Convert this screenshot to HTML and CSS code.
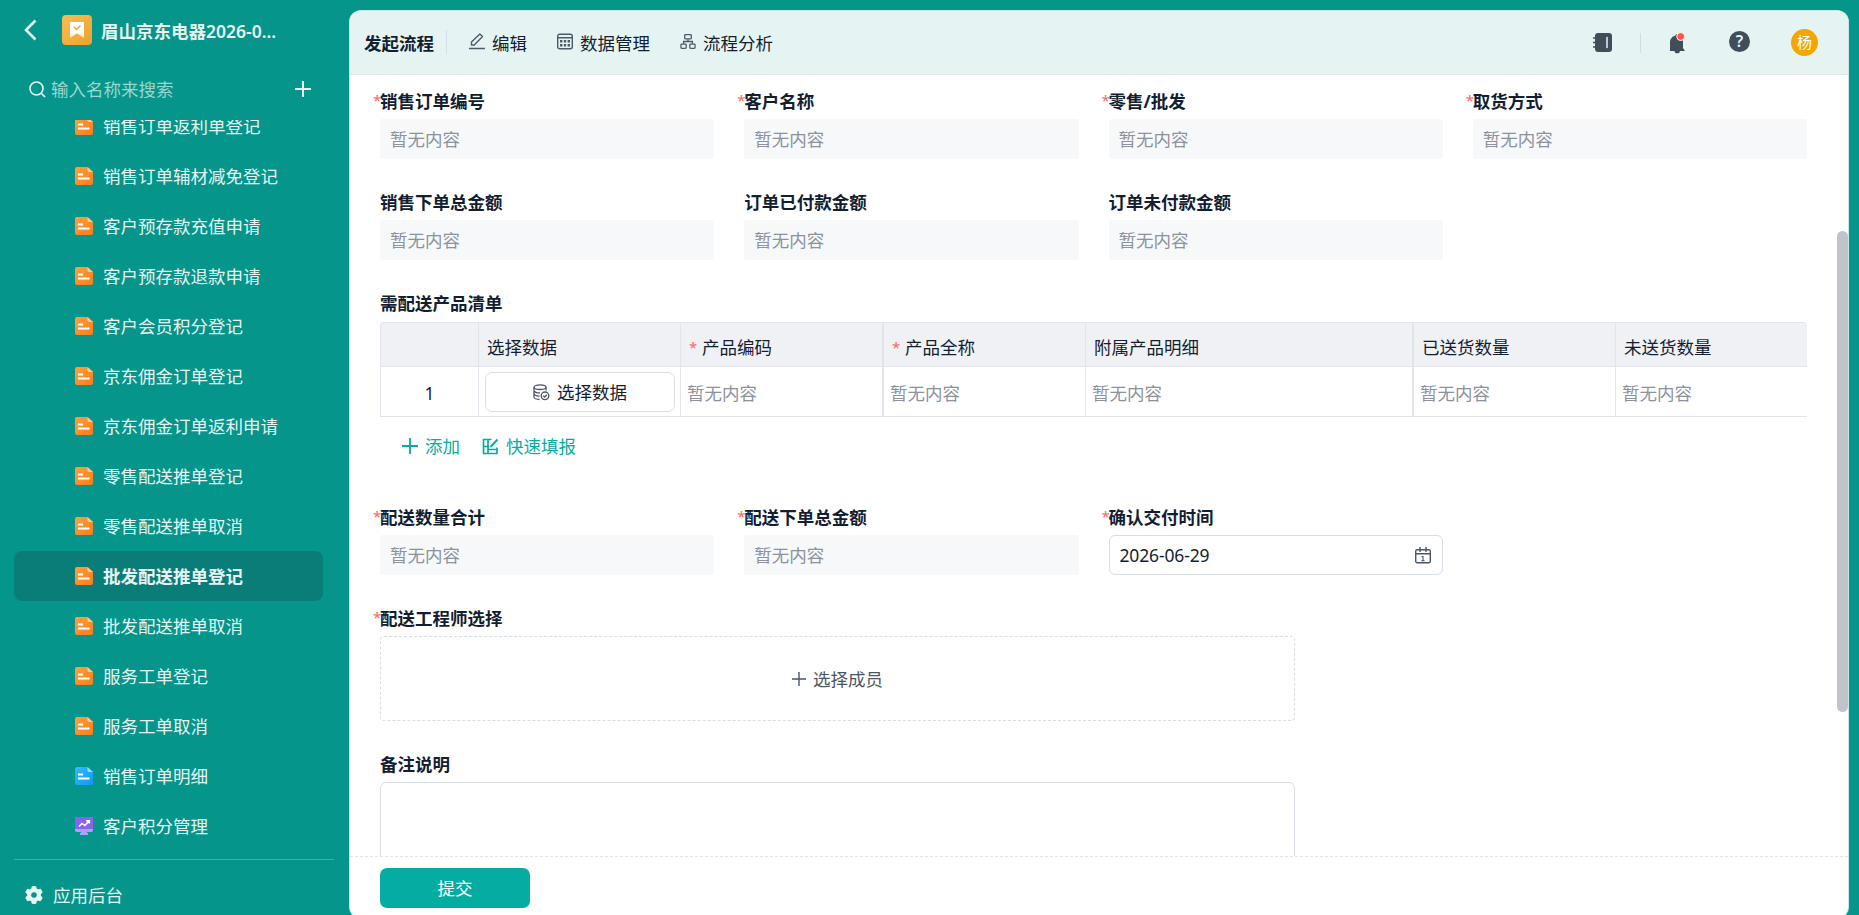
FILE: index.html
```
<!DOCTYPE html>
<html lang="zh-CN">
<head>
    <meta charset="UTF-8">
    <meta name="viewport" content="width=device-width, initial-scale=1.0">
    <title>批发配送推单登记</title>
    <link rel="stylesheet" href="styles.css">
</head>
<body>
    <svg class="defs" width="0" height="0">
        <defs>
            <linearGradient id="orange" x1="0" y1="0" x2="1" y2="1">
                <stop offset="0" stop-color="#ffa03c"/><stop offset="1" stop-color="#fb7d1a"/>
            </linearGradient>
            <linearGradient id="blue" x1="0" y1="0" x2="1" y2="1">
                <stop offset="0" stop-color="#35b8ff"/><stop offset="1" stop-color="#0a9bf0"/>
            </linearGradient>
            <linearGradient id="gold" x1="0" y1="0" x2="1" y2="1">
                <stop offset="0" stop-color="#f8bd58"/><stop offset="1" stop-color="#eda22a"/>
            </linearGradient>
            <linearGradient id="fade" x1="0" y1="0" x2="0" y2="1">
                <stop offset="0" stop-color="#fff"/><stop offset="0.6" stop-color="#fff"/><stop offset="1" stop-color="#fbdfb0"/>
            </linearGradient>
            <symbol id="doc" viewBox="0 0 18 18">
                <path d="M2 0H12.5L18 5V16a2 2 0 0 1-2 2H2a2 2 0 0 1-2-2V2a2 2 0 0 1 2-2z" fill="url(#orange)"/>
                <path d="M12.5 0L18 5H14a1.500 1.500 0 0 1-1.500-1.500z" fill="#ffc98a"/>
                <path d="M3 7.500H8M3 11.500H14.500" stroke="#fff" stroke-width="2"/>
            </symbol>
            <symbol id="plus" viewBox="0 0 16 16">
                <path d="M8 0V16M0 8H16" fill="none" stroke="currentColor"/>
            </symbol>
        </defs>
    </svg>

    <aside class="sidebar">
        <div class="app">
            <svg class="back" width="13" height="22" viewBox="0 0 13 22"><path d="M11.500 1.500L2 11L11.500 20.500" fill="none" stroke="#e6f4f3" stroke-width="2.600"/></svg>
            <svg class="logo" width="30" height="30" viewBox="0 0 30 30">
                <rect width="30" height="30" rx="4" fill="url(#gold)"/>
                <path d="M9 7H21a1 1 0 0 1 1 1V23L15 18.500L8 23V8a1 1 0 0 1 1-1z" fill="url(#fade)"/>
                <path d="M12 12L14.500 14.500L18.500 10.500" fill="none" stroke="#f0a830" stroke-width="1.500"/>
            </svg>
            <b>眉山京东电器2026-0...</b>
        </div>
        <div class="search">
            <svg width="17" height="17" viewBox="0 0 17 17"><circle cx="7.500" cy="7.500" r="6.500" fill="none" stroke="#e6f4f3" stroke-width="1.600"/><path d="M12 12L16 16" stroke="#e6f4f3" stroke-width="1.700"/></svg>
            <span>输入名称来搜索</span>
            <svg class="new" width="16" height="16"><use href="#plus"/></svg>
        </div>
        <div class="list">
            <ul>
                <li><svg width="18" height="18"><use href="#doc"/></svg>销售订单返利单登记</li>
                <li><svg width="18" height="18"><use href="#doc"/></svg>销售订单辅材减免登记</li>
                <li><svg width="18" height="18"><use href="#doc"/></svg>客户预存款充值申请</li>
                <li><svg width="18" height="18"><use href="#doc"/></svg>客户预存款退款申请</li>
                <li><svg width="18" height="18"><use href="#doc"/></svg>客户会员积分登记</li>
                <li><svg width="18" height="18"><use href="#doc"/></svg>京东佣金订单登记</li>
                <li><svg width="18" height="18"><use href="#doc"/></svg>京东佣金订单返利申请</li>
                <li><svg width="18" height="18"><use href="#doc"/></svg>零售配送推单登记</li>
                <li><svg width="18" height="18"><use href="#doc"/></svg>零售配送推单取消</li>
                <li class="active"><svg width="18" height="18"><use href="#doc"/></svg>批发配送推单登记</li>
                <li><svg width="18" height="18"><use href="#doc"/></svg>批发配送推单取消</li>
                <li><svg width="18" height="18"><use href="#doc"/></svg>服务工单登记</li>
                <li><svg width="18" height="18"><use href="#doc"/></svg>服务工单取消</li>
                <li>
                    <svg width="18" height="18" viewBox="0 0 18 18">
                        <path d="M2 0H12.500L18 5V16a2 2 0 0 1-2 2H2a2 2 0 0 1-2-2V2a2 2 0 0 1 2-2z" fill="url(#blue)"/>
                        <path d="M12.500 0L18 5H14a1.500 1.500 0 0 1-1.500-1.500z" fill="#94dbff"/>
                        <path d="M3 7.500H8M3 11.500H14.500" stroke="#fff" stroke-width="2"/>
                    </svg>销售订单明细
                </li>
                <li>
                    <svg width="18" height="18" viewBox="0 0 18 18">
                        <path d="M6 14H12V16H13V18H5V16H6z" fill="#b39bff"/>
                        <rect width="18" height="15" rx="2" fill="#b39bff"/>
                        <path d="M2 0H16a2 2 0 0 1 2 2V12H0V2a2 2 0 0 1 2-2z" fill="#8763f0"/>
                        <path d="M4 9.500L7 6.500L10 8.500L14 4M11 3.800H14.300V6.500" fill="none" stroke="#fff" stroke-width="1.500"/>
                    </svg>客户积分管理
                </li>
            </ul>
        </div>
        <div class="admin">
            <svg width="18" height="18" viewBox="0 0 18 18">
                <g fill="#e6f4f3">
                    <rect x="6.500" y="0" width="5" height="18" rx="1.500"/>
                    <rect x="6.500" y="0" width="5" height="18" rx="1.500" transform="rotate(60 9 9)"/>
                    <rect x="6.500" y="0" width="5" height="18" rx="1.500" transform="rotate(120 9 9)"/>
                    <circle cx="9" cy="9" r="7"/>
                </g>
                <circle cx="9" cy="9" r="2.800" fill="#05958a"/>
            </svg>
            <span>应用后台</span>
        </div>
    </aside>

    <main>
        <header>
            <b>发起流程</b>
            <i class="line"></i>
            <a class="tab">
                <svg width="16" height="17" viewBox="0 0 16 17" fill="none" stroke="#4d5b68" stroke-width="1.400"><path d="M0 15.500H16"/><path d="M2.500 12V9L10.800 .900L13.500 3.600L5.300 12z" stroke-linejoin="round"/></svg>编辑
            </a>
            <a class="tab">
                <svg width="16" height="17" viewBox="0 0 16 17" fill="none" stroke="#4d5b68"><rect x=".7" y="1.200" width="14.600" height="14.600" rx="2" stroke-width="1.400"/><path d="M1 4.700H15" stroke-width="1.400"/><path d="M3 8.200H13M3 12.200H13" stroke-width="2.400" stroke-dasharray="2.400 1.400"/></svg>数据管理
            </a>
            <a class="tab">
                <svg width="16" height="17" viewBox="0 0 17 17" fill="none" stroke="#4d5b68" stroke-width="1.400"><rect x="5" y="1.200" width="7" height="4.600" rx=".8"/><rect x="1" y="11.200" width="5.600" height="4.600" rx=".8"/><rect x="10.400" y="11.200" width="5.600" height="4.600" rx=".8"/><path d="M8.500 6V8.500M3.800 11V8.500H13.200V11"/></svg>流程分析
            </a>
            <div class="tools">
                <svg class="book" width="19" height="19" viewBox="0 0 19 19"><rect x="2" width="17" height="19" rx="3" fill="#414e5a"/><path d="M0 5H4M0 9.500H4M0 14H4" stroke="#414e5a" stroke-width="1.500"/><path d="M14 4.500V14.500" stroke="#e5f4f3" stroke-width="1.500" stroke-linecap="round"/></svg>
                <i class="sep"></i>
                <svg class="bell" width="17" height="22" viewBox="0 0 17 22"><path d="M6.500 3.500a1.500 1.500 0 0 1 3 0C12.500 4.500 14 7 14 10V16L16 19H0.500L1 18.500V10C1 7 3.500 4.300 6.500 3.500z" fill="#414e5a"/><path d="M5.500 19a2.700 2.300 0 0 0 5.400 0z" fill="#414e5a"/><circle cx="11.700" cy="4.500" r="4" fill="#ff5454" stroke="#fff" stroke-width="1"/></svg>
                <div class="help">?</div>
                <div class="avatar">杨</div>
            </div>
        </header>

        <div class="form">
            <div class="grid">
                <div class="item must"><label>销售订单编号</label><p>暂无内容</p></div>
                <div class="item must"><label>客户名称</label><p>暂无内容</p></div>
                <div class="item must"><label>零售/批发</label><p>暂无内容</p></div>
                <div class="item must"><label>取货方式</label><p>暂无内容</p></div>
                <div class="item"><label>销售下单总金额</label><p>暂无内容</p></div>
                <div class="item"><label>订单已付款金额</label><p>暂无内容</p></div>
                <div class="item"><label>订单未付款金额</label><p>暂无内容</p></div>
            </div>

            <div class="item detail">
                <label>需配送产品清单</label>
                <div class="table">
                    <div class="row head">
                        <span></span>
                        <span>选择数据</span>
                        <span><em>*</em>产品编码</span>
                        <span><em>*</em>产品全称</span>
                        <span>附属产品明细</span>
                        <span>已送货数量</span>
                        <span>未送货数量</span>
                    </div>
                    <div class="row">
                        <span class="num">1</span>
                        <span>
                            <button class="pick">
                                <svg width="17" height="17" viewBox="0 0 17 17" fill="none" stroke="#4d5663" stroke-width="1.300"><ellipse cx="7" cy="3.200" rx="6" ry="2.300"/><path d="M1 3.200V13C1 14.300 3.500 15.500 6.500 15.500M13 3.200V6.500M1 6.500C1 8 4 9 7 8.800M1 9.800C1 11.200 4 12.200 6.500 12"/><circle cx="12" cy="11.800" r="3.800"/><path d="M10.200 11.800L11.600 13.100L13.800 10.700"/></svg>选择数据
                            </button>
                        </span>
                        <span>暂无内容</span>
                        <span>暂无内容</span>
                        <span>暂无内容</span>
                        <span>暂无内容</span>
                        <span>暂无内容</span>
                    </div>
                </div>
                <div class="links">
                    <a><svg width="16" height="16"><use href="#plus"/></svg>添加</a>
                    <a><svg width="17" height="17" viewBox="0 0 17 17" fill="none" stroke="currentColor" stroke-width="1.700"><path d="M9.500 1.500H1.500V15.500H15V9.500M1.500 8.500H7M6 1.500V15.500M6 11.500H15"/><path d="M8.500 9L15.500 1.500" stroke-width="2"/></svg>快速填报</a>
                </div>
            </div>

            <div class="grid">
                <div class="item must"><label>配送数量合计</label><p>暂无内容</p></div>
                <div class="item must"><label>配送下单总金额</label><p>暂无内容</p></div>
                <div class="item must">
                    <label>确认交付时间</label>
                    <div class="date">
                        <span>2026-06-29</span>
                        <svg width="16" height="17" viewBox="0 0 16 17" fill="none" stroke="#4d5663" stroke-width="1.400"><rect x=".7" y="2.700" width="14.600" height="13" rx="1.500"/><path d="M1 6.700H15M5 0V5M11 0V5"/><path d="M6.500 9.500H8V14M6.300 13.800H9.700" stroke-width="1.100"/></svg>
                    </div>
                </div>
            </div>

            <div class="item must wide">
                <label>配送工程师选择</label>
                <div class="member"><svg width="14" height="14"><use href="#plus"/></svg>选择成员</div>
            </div>
            <div class="item wide note">
                <label>备注说明</label>
                <div class="textarea"></div>
            </div>
            <div class="thumb"></div>
        </div>

        <footer><button class="submit">提交</button></footer>
    </main>
</body>
</html>
```
FILE: styles.css
```
*{
    margin: 0;
    padding: 0;
    box-sizing: border-box;
}
body{
    display: flex;
    height: 915px;
    overflow: hidden;
    background-color: #05958a;
    font-family: "Noto Sans", "Noto Sans CJK SC", sans-serif;
    font-size: 17.5px;
    line-height: 24px;
    color: #141e31;
}
svg{
    display: block;
    flex-shrink: 0;
    overflow: visible;
}
.defs{
    position: absolute;
}
button{
    font: inherit;
}

/* sidebar */
.sidebar{
    width: 349px;
    flex-shrink: 0;
    display: flex;
    flex-direction: column;
    color: #e6f4f3;
}
.app{
    height: 60px;
    padding-left: 24px;
    display: flex;
    align-items: center;
}
.logo{
    margin: 0 9px 0 25px;
}
.app b{
    font-weight: 600;
    padding-top: 1px;
}
.search{
    height: 60px;
    padding: 0 38px 2px 29px;
    display: flex;
    align-items: center;
}
.search span{
    flex: 1;
    margin-left: 5px;
    color: #9bd5d0;
}
.new{
    stroke-width: 2;
}
.list{
    height: 731px;
    overflow: hidden;
}
.list ul{
    list-style: none;
    margin: -19px 26px 0 14px;
}
.list li{
    height: 50px;
    padding-left: 61px;
    display: flex;
    align-items: center;
    gap: 10px;
    border-radius: 8px;
}
.list .active{
    background-color: #0b7d78;
    font-weight: bold;
}
.admin{
    margin: 8px 15px 0 14px;
    padding: 23px 0 0 11px;
    border-top: 1px solid #40b0a7;
    display: flex;
    align-items: center;
    gap: 10px;
}

/* panel */
main{
    width: 1500px;
    height: 909px;
    margin-top: 10px;
    flex-shrink: 0;
    display: flex;
    flex-direction: column;
    background-color: #fff;
    border: 1px solid #c9e8e5;
    border-bottom: none;
    border-radius: 12px;
    overflow: hidden;
}
header{
    height: 64px;
    flex-shrink: 0;
    padding: 0 30px 0 14px;
    display: flex;
    align-items: center;
    background-color: #e5f4f3;
    border-bottom: 1px solid #dfe5e8;
}
.line{
    width: 1px;
    height: 25px;
    margin: 0 22px 0 12px;
    background-color: #d3dfe0;
}
.tab{
    display: flex;
    align-items: center;
    gap: 7px;
    margin-right: 30px;
}
.tab svg{
    margin-top: -3px;
}
.tools{
    margin-left: auto;
    display: flex;
    align-items: center;
}
.sep{
    width: 1px;
    height: 20px;
    margin: 0 28px 0 28px;
    background-color: #cfdfe0;
}
.help{
    width: 21px;
    height: 21px;
    margin: -2px 41px 0 43px;
    border-radius: 50%;
    background-color: #414e5a;
    color: #e5f4f3;
    font-size: 16px;
    font-weight: 600;
    line-height: 21px;
    text-align: center;
}
.avatar{
    width: 27px;
    height: 27px;
    border-radius: 50%;
    background-color: #f2a700;
    color: #fff;
    font-size: 15px;
    line-height: 26px;
    text-align: center;
}

/* form */
.form{
    position: relative;
    height: 781px;
    flex-shrink: 0;
    padding: 15px 41px 0 30px;
    overflow: hidden;
}
.grid{
    display: grid;
    grid-template-columns: repeat(4, 1fr);
    gap: 32px 30px;
}
.item label{
    display: block;
    height: 29px;
    font-weight: bold;
    line-height: 22px;
}
.must label::before{
    content: "*";
    display: inline-block;
    width: 7px;
    margin-left: -7px;
    color: #f86a6a;
    font-weight: normal;
    font-size: 15px;
    line-height: 20px;
    vertical-align: top;
}
.item p{
    height: 40px;
    padding: 8px 10px;
    border-radius: 3px;
    background-color: #f6f8fa;
    color: #8d929c;
}
.detail{
    margin-top: 32px;
}
.detail label{
    height: 30px;
}
.table{
    border: 1px solid #e3e4eb;
    border-right: none;
    border-radius: 4px 4px 0 0;
    overflow: hidden;
}
.row{
    display: grid;
    grid-template-columns: 98px 202px 203px 202px 328px 202px 1fr;
    height: 49px;
}
.row > span{
    display: flex;
    align-items: center;
    padding: 3px 0 0 6px;
    border-right: 1px solid #e3e4eb;
    color: #8d929c;
}
.row > span:nth-child(3), .row > span:nth-child(5){
    border-right-width: 2px;
}
.row > span:last-child{
    border-right: none;
}
.head{
    height: 44px;
    background-color: #f0f1f5;
    border-bottom: 1px solid #e3e4eb;
}
.head > span{
    padding: 4px 0 0 8px;
    color: #141e31;
}
.head em{
    width: 13px;
    color: #f86a6a;
    font-style: normal;
    font-size: 15px;
}
.row .num{
    justify-content: center;
    padding-left: 0;
    color: #141e31;
}
.row .pick{
    width: 190px;
    height: 40px;
    margin-top: -2px;
    display: flex;
    align-items: center;
    justify-content: center;
    gap: 7px;
    border: 1px solid #dcdfe6;
    border-radius: 7px;
    background-color: #fff;
    color: #141e31;
}
.links{
    display: flex;
    gap: 22px;
    padding: 17px 0 0 22px;
    margin-bottom: 48px;
    color: #05aca2;
}
.links a{
    display: flex;
    align-items: center;
    gap: 7px;
}
.links use{
    stroke-width: 1.8;
}
.date{
    height: 40px;
    padding: 0 11px 0 10px;
    display: flex;
    align-items: center;
    justify-content: space-between;
    border: 1px solid #d9dde5;
    border-radius: 6px;
    letter-spacing: -0.15px;
}
.wide{
    width: 915px;
    margin-top: 32px;
}
.member{
    height: 85px;
    display: flex;
    align-items: center;
    justify-content: center;
    gap: 7px;
    border: 1px dashed #d9dde5;
    border-radius: 4px;
    color: #4d5663;
}
.member use{
    stroke-width: 1.6;
}
.textarea{
    height: 100px;
    border: 1px solid #d9dde5;
    border-radius: 6px;
}
.thumb{
    position: absolute;
    top: 156px;
    right: 0;
    width: 11px;
    height: 481px;
    border-radius: 6px;
    background-color: #c1c3cb;
}

footer{
    flex: 1;
    padding: 11px 30px;
    border-top: 1px dashed #e3e4eb;
}
.submit{
    width: 150px;
    height: 40px;
    border: none;
    border-radius: 7px;
    background-color: #05aca2;
    color: #fff;
    line-height: 40px;
}
```
